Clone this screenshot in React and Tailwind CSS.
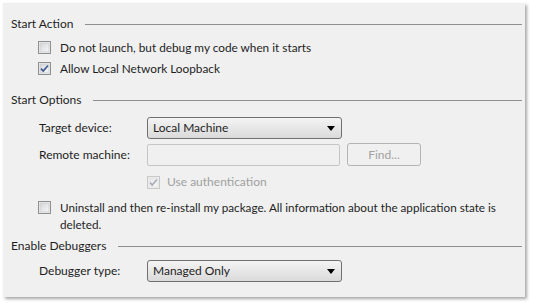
import React from 'react';

const font = { fontFamily: 'Lato, "Liberation Sans", sans-serif' };

function CheckBox({ checked, disabled }) {
  const border = disabled ? '#c8c8c8' : '#8e8f8f';
  const check = disabled ? '#a7adba' : '#3f5590';
  return (
    <svg width="13" height="13" viewBox="0 0 13 13" className="shrink-0">
      <defs>
        <linearGradient id={disabled ? 'cbd' : 'cb'} x1="0" y1="0" x2="1" y2="1">
          <stop offset="0" stopColor={disabled ? '#e6e6e6' : '#d4d6d9'} />
          <stop offset="1" stopColor={disabled ? '#f8f8f8' : '#f7f7f7'} />
        </linearGradient>
      </defs>
      <rect x="0.5" y="0.5" width="12" height="12" fill="#f4f4f4" stroke={border} />
      <rect x="2" y="2" width="9" height="9" fill={`url(#${disabled ? 'cbd' : 'cb'})`} stroke={disabled ? '#e0e0e0' : '#c9cbcf'} strokeWidth="0.8" />
      {checked && (
        <path d="M3 6.6 L5.2 9 L10 3.4" fill="none" stroke={check} strokeWidth="1.6" />
      )}
    </svg>
  );
}

function SectionHeader({ title, mt }) {
  return (
    <div className={`flex items-center h-5 pr-[3px] ${mt}`}>
      <span className="text-[12px] text-[#1e1e1e] whitespace-nowrap">{title}</span>
      <div className="flex-1 h-px bg-[#8f8f8f] ml-[12px] mt-[1px]" />
    </div>
  );
}

function Dropdown({ value }) {
  return (
    <div className="w-[195px] h-[22px] rounded-[3px] border border-[#707070] bg-gradient-to-b from-[#f4f4f4] to-[#dadada] flex items-center justify-between pl-[5px] pr-[6px]">
      <span className="text-[12px] text-[#1e1e1e]">{value}</span>
      <svg width="8" height="5" viewBox="0 0 8 5">
        <path d="M0 0 H8 L4 5 Z" fill="#000" />
      </svg>
    </div>
  );
}

export default function App() {
  return (
    <div className="w-[533px] h-[303px] bg-white pt-[3px] pl-[3px]" style={font}>
      <div className="w-[522px] h-[294px] bg-[#f0f0f0] shadow-[2px_2px_3px_rgba(0,0,0,0.35)] pt-[11px] pl-[8px]">
        <SectionHeader title="Start Action" mt="" />

        <div className="pl-[27px] mt-[3px]">
          <div className="flex items-center h-[21px] gap-[9px]">
            <CheckBox />
            <span className="text-[11.8px] text-[#1e1e1e]">Do not launch, but debug my code when it starts</span>
          </div>
          <div className="flex items-center h-[21px] gap-[9px]">
            <CheckBox checked />
            <span className="text-[11.8px] text-[#1e1e1e]">Allow Local Network Loopback</span>
          </div>
        </div>

        <SectionHeader title="Start Options" mt="mt-[11px]" />

        <div className="pl-[28px]">
          <div className="flex items-center mt-[7px]">
            <span className="w-[108px] text-[12px] text-[#1e1e1e]">Target device:</span>
            <Dropdown value="Local Machine" />
          </div>
          <div className="flex items-center mt-[4px]">
            <span className="w-[108px] text-[12px] text-[#1e1e1e]">Remote machine:</span>
            <div className="w-[193px] h-[22px] rounded-[2px] border border-[#c6c6c6] bg-[#f0f0f0]" />
            <button className="ml-[7px] w-[74px] h-[23px] rounded-[3px] border border-[#b4b4b4] bg-[#f0f0f0] text-[12px] text-[#a2a2a2]">
              Find...
            </button>
          </div>
          <div className="flex items-center h-5 mt-[6px] pl-[108px] gap-[7px]">
            <CheckBox checked disabled />
            <span className="text-[12px] text-[#a0a0a0]">Use authentication</span>
          </div>
        </div>

        <div className="flex items-start gap-[9px] pl-[27px] mt-[7px]">
          <div className="pt-[2px]">
            <CheckBox />
          </div>
          <span className="w-[450px] text-[11.7px] leading-[17px] text-[#1e1e1e]">
            Uninstall and then re-install my package. All information about the application state is deleted.
          </span>
        </div>

        <SectionHeader title="Enable Debuggers" mt="mt-[3px]" />

        <div className="pl-[28px]">
          <div className="flex items-center mt-[4px]">
            <span className="w-[108px] text-[12px] text-[#1e1e1e]">Debugger type:</span>
            <Dropdown value="Managed Only" />
          </div>
        </div>
      </div>
    </div>
  );
}
